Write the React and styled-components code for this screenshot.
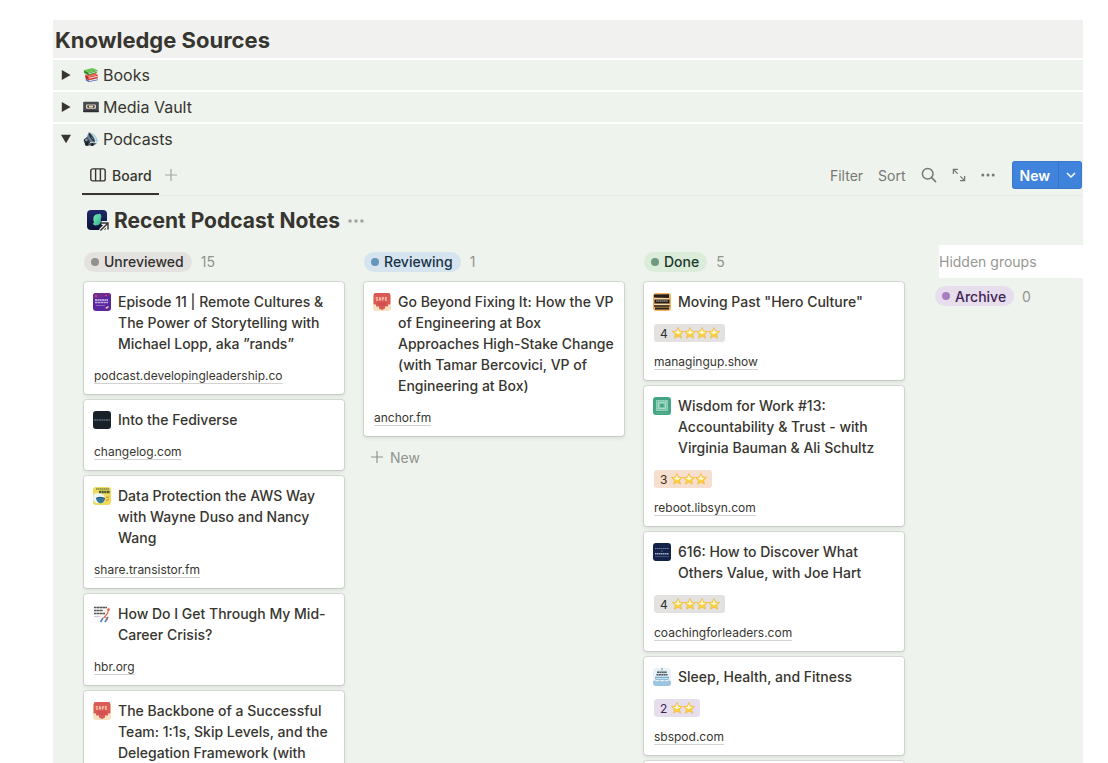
import React from "react";
import styled, { createGlobalStyle } from "styled-components";

const star = "M8 .6l2.200 4.800 5.300.6-3.900 3.600 1.100 5.400L8 12.300 3.300 15l1.100-5.400L.5 6l5.300-.6z";

function StarIcon() {
  return (
    <svg width="12" height="12" viewBox="0 0 16 16" aria-hidden="true">
      <path d={star} fill="#fbd23c" stroke="#eeb445" strokeWidth=".8" strokeLinejoin="round" />
      <path d="M8 2.400l1.500 3.900 3.600.5L8 9.600 2.900 6.800l3.600-.5z" fill="#fff9d2" />
    </svg>
  );
}

function PlusIcon() {
  return (
    <svg width="14" height="14" viewBox="0 0 14 14" stroke="currentColor" strokeWidth="1.200" aria-hidden="true">
      <path d="M7 1v12M1 7h12" />
    </svg>
  );
}

function DotsIcon({ size = 14 }) {
  return (
    <svg width={size} height={size} viewBox="0 0 14 14" fill="currentColor" aria-hidden="true">
      <circle cx="1.800" cy="7" r="1.500" />
      <circle cx="7" cy="7" r="1.500" />
      <circle cx="12.200" cy="7" r="1.500" />
    </svg>
  );
}

function BooksIcon() {
  return (
    <svg width="16" height="16" viewBox="0 0 16 16" aria-hidden="true">
      <path d="M2.800 11.400l3.200 1.800 8.600-1.600v1.600l-8.800 1.900-3-1.700z" fill="#5767b5" />
      <path d="M5.800 13.300l8.600-1.700v.9l-8.600 1.800z" fill="#eceefa" />
      <path d="M2.200 7.800L12 5.600l2.600 1.800-8.800 2.200z" fill="#ee5a4c" />
      <path d="M2.200 7.800l3.600 1.900v3.600l-3.400-2z" fill="#c5281f" />
      <path d="M5.800 9.700l8.800-2v3.600l-8.800 2z" fill="#d8342b" />
      <path d="M6 10.700l8.400-1.900v1L6 11.800z" fill="#f7ebe8" />
      <path d="M.8 3.200L9.400 1l4.800 2-8.400 2.600z" fill="#67c64f" />
      <path d="M.8 3.200l5 2.500v2.600L1.200 5.900z" fill="#2f8a2c" />
      <path d="M5.800 5.700L14.200 3v2.400L5.800 8.200z" fill="#3b9b33" />
      <path d="M6 6.400l8-2.500v.8L6 7.300z" fill="#e3efdd" />
    </svg>
  );
}

function TapeIcon() {
  return (
    <svg width="16" height="16" viewBox="0 0 16 16" aria-hidden="true">
      <rect x=".2" y="2.800" width="15.600" height="10.200" rx=".8" fill="#45484d" />
      <rect x=".2" y="11.600" width="15.600" height="1.600" rx=".6" fill="#2a2c30" />
      <rect x="3" y="5.400" width="10" height="4.400" rx="1" fill="#d9d3c9" />
      <rect x="4.200" y="6.200" width="7.600" height="2.800" rx="1.400" fill="#3d3b3a" />
      <rect x="5.800" y="6.600" width="4.400" height="2" fill="#f0d9ae" />
    </svg>
  );
}

function SpeakerIcon() {
  return (
    <svg width="16" height="16" viewBox="0 0 16 16" aria-hidden="true">
      <path d="M7 1.400c4.600.4 8 5 8.200 9.800l-4 1z" fill="#d3e6e8" />
      <path d="M9 2.600c2.800 1.400 4.600 4.600 4.800 8" fill="none" stroke="#a6c7cf" />
      <path d="M5.800 1.600c2-.6 6.600 6.200 6.400 9.200L6 11.200 3.600 6.600z" fill="#6b8193" />
      <path d="M5.800 1.600c2 1.400 5 5.600 6.200 9.200-3.400-.8-6.600-5.800-6.200-9.200z" fill="#22303b" />
      <path d="M8 5.400c1.200.8 2 2 2.400 3.200-1.200-.6-2.200-1.800-2.400-3.200z" fill="#7b95a5" />
      <path d="M.8 8.400l3-2.200 3.600 5-3 2.400C2 13.600.6 10.800.8 8.400z" fill="#2b333c" />
      <path d="M1.800 8.800l2-1.400 1.200 1.600-2 1.600z" fill="#8f9fac" />
      <path d="M4 12.600l7-1.200 3 1.400-4.800 2-4.600-.2z" fill="#56636e" />
      <circle cx="3.800" cy="13" r="1.900" fill="#1c232b" />
      <circle cx="9.400" cy="13.600" r="1.500" fill="#1c232b" />
    </svg>
  );
}

function BoardIcon() {
  return (
    <svg width="16" height="14" viewBox="0 0 16 14" fill="none" stroke="currentColor" strokeWidth="1.400" aria-hidden="true">
      <rect x=".8" y=".9" width="14.400" height="12" rx="2" />
      <path d="M5.600 1v12M10.400 1v12" />
    </svg>
  );
}

function SearchIcon() {
  return (
    <svg width="16" height="16" viewBox="0 0 16 16" fill="none" stroke="currentColor" strokeWidth="1.500" strokeLinecap="round" aria-hidden="true">
      <circle cx="6.700" cy="6.700" r="5.300" />
      <path d="M10.600 10.600l4 4" />
    </svg>
  );
}

function ExpandIcon() {
  return (
    <svg width="14" height="14" viewBox="0 0 14 14" fill="none" stroke="currentColor" strokeWidth="1.300" aria-hidden="true">
      <path d="M1.400 6V1.400H6M1.400 1.400l4.200 4.200M12.600 8v4.600H8M12.600 12.600L8.400 8.400" />
    </svg>
  );
}

function PageLogo() {
  return (
    <svg width="24" height="24" viewBox="0 0 24 24" aria-hidden="true">
      <defs>
        <linearGradient id="logo-back" x1="0" y1="0" x2="0" y2="1">
          <stop offset="0" stopColor="#20286e" />
          <stop offset="1" stopColor="#0d1033" />
        </linearGradient>
        <linearGradient id="logo-leaf" x1="0" y1="0" x2="1" y2="1">
          <stop offset="0" stopColor="#7af0bd" />
          <stop offset="1" stopColor="#2fae86" />
        </linearGradient>
      </defs>
      <rect x="1" y="1" width="20" height="20" rx="4" fill="url(#logo-back)" />
      <path
        d="M7.400 9.600c0-3 2.200-4.600 4.600-4.300 1.200-1 2.600-.7 2.900.6.800 1.500.5 2.800-.2 4 .9 2.300-.2 5-2.500 6.200-2.200.8-4.600.2-5.400-1.400.8-.4 1.200-.9 1.300-1.600-.7-.9-.9-2.200-.7-3.500z"
        fill="url(#logo-leaf)"
      />
      <path d="M14.400 21.600l7.200-7.200M15.600 14h6.400v6.400" fill="none" stroke="#eef3ed" strokeWidth="4" />
      <path d="M14.400 21.600l7.200-7.200M15.600 14h6.400v6.400" fill="none" stroke="#37352f" strokeWidth="1.400" />
    </svg>
  );
}

const artwork = {
  leadership: (
    <>
      <rect width="18" height="18" fill="#5a279e" />
      <path d="M0 0h18v3L0 6z" fill="#6f2c92" />
      <path d="M2 7h13" stroke="#d5c3ef" strokeWidth="1.600" strokeDasharray="2 .4" />
      <path d="M2 9.500h13" stroke="#c4abe6" strokeWidth="1.600" strokeDasharray="2.400 .4" />
      <path d="M3 12.500h9" stroke="#8c66c4" />
      <circle cx="3" cy="3" r="1" fill="#e0574a" />
      <circle cx="13" cy="2.500" r=".8" fill="#d9604f" />
      <path d="M12 15l3-2 1 .8-2 2z" fill="#f4d0b0" />
    </>
  ),
  changelog: (
    <>
      <rect width="18" height="18" fill="#18212a" />
      <path d="M1 9h16" stroke="#7f8990" strokeDasharray="2 .4" />
    </>
  ),
  cloud: (
    <>
      <rect width="18" height="18" fill="#eddc5c" />
      <path d="M3 2h13" stroke="#79823f" strokeWidth="1.600" strokeDasharray="1.600 .4" />
      <path d="M6 5h11" stroke="#4e5b34" strokeWidth="2.400" strokeDasharray="2.200 .4" />
      <path d="M0 10c0-3 3-5 6-3.400 3-.4 6 1.400 5.600 4.400l-3 5H3l-3-3z" fill="#edf4f4" />
      <path d="M3 11.500c2-1.500 6-1.500 9 0-.4 3-2.400 4.800-4.400 4.800S3.600 14.500 3 11.500z" fill="#35789b" />
      <path d="M3 11.500c2-1.500 6-1.500 9 0" stroke="#1f4a66" fill="none" />
      <path d="M13 10.500l3-.5M13 13.500l3-1" stroke="#dd7c35" />
    </>
  ),
  coaching: (
    <>
      <rect width="18" height="18" fill="#fafafa" />
      <path d="M1 2.500h13M1 5.500h9M1 8.500h11" stroke="#555" strokeWidth="1.600" strokeDasharray="2.600 .3" />
      <path d="M1 11.500h6" stroke="#cfc5de" />
      <path d="M7.500 17l2.500-4M12 17l3-5" stroke="#4a86bf" strokeWidth="1.600" />
      <path d="M10.500 13l4-4.500L15.500 4M12.500 12l2 3" stroke="#e4694a" strokeWidth="1.200" fill="none" />
      <circle cx="15.500" cy="4.500" r="1.300" fill="#e0603c" />
    </>
  ),
  superteam: (
    <>
      <rect width="18" height="18" fill="#f6e2bf" />
      <path d="M1 0h16v11.500h-2v2h-3v2l-3 1.500-3-1.500v-2H3v-2H1z" fill="#da5a57" />
      <path d="M0 2h1v9H0zM17 2h1v9h-1z" fill="#ecaa93" />
      <path d="M3 7.300h1.800V6H3.200V4.500H5M6.500 4.200v3h1.300v-3M9.600 7.600V4.400h1.200V6H9.800M14 4.400h-1.500v3H14M12.500 6H14" stroke="#f3c3a5" fill="none" />
      <path d="M4 10h10M5 12h8" stroke="#cb4a4b" />
    </>
  ),
  managing: (
    <>
      <rect width="18" height="18" fill="#f0b25a" />
      <path d="M1 1.500l15-.3V5L1 4.600zM1.500 6.500h15v4h-15zM1 12.200h15.500v1.600H1zM2 14.600h14v2H2z" fill="#231f1e" />
      <path d="M1 5.700h15M1.500 11.400h15" stroke="#f9e9cd" strokeWidth=".8" />
      <path d="M3 8h12" stroke="#b9b4ac" strokeDasharray="1.600 .3" />
    </>
  ),
  reboot: (
    <>
      <rect width="18" height="18" fill="#43a581" />
      <rect x="3.500" y="3.500" width="11" height="10" fill="#7cc5aa" stroke="#a5dcc7" strokeDasharray="1.200 .4" />
      <rect x="5.600" y="5.600" width="6.800" height="5.800" fill="none" stroke="#b6e2d2" strokeWidth=".8" />
      <rect x="7.500" y="7.200" width="3" height="2.600" fill="#3b9d7a" />
      <path d="M3 16h12" stroke="#6bbb9e" strokeWidth=".8" />
    </>
  ),
  leaders: (
    <>
      <rect width="18" height="18" fill="#12224a" />
      <path d="M2 5.500h14" stroke="#7f8cab" strokeWidth=".8" strokeDasharray="1.600 .3" />
      <path d="M8 8h2" stroke="#66759a" strokeWidth=".8" />
      <path d="M2 10.700h14" stroke="#a3aec5" strokeWidth="1.400" strokeDasharray="1.600 .4" />
      <path d="M2 13.500h14" stroke="#4a5a80" strokeWidth=".8" />
    </>
  ),
  stronger: (
    <>
      <rect width="18" height="18" fill="#e9f2f7" />
      <path d="M4 2.500h10l1 5.500H3z" fill="#d5e1e8" />
      <path d="M4 4.300h10M3.500 6.800h11" stroke="#4d5a65" strokeWidth="1.400" strokeDasharray="2 .4" />
      <path d="M2 8.800h14l-.6 3H2.600z" fill="#6fa8ca" />
      <path d="M3 10.400h12" stroke="#eef6fa" strokeWidth=".8" />
      <path d="M0 13.500l2-1.200 2 1.200 2.500-1.200L9 13.500l2.500-1.200 2.500 1.200 2-1.200 2 1.200V18H0z" fill="#9cc5e0" />
      <path d="M9 0v2.200" stroke="#5a8fb8" />
    </>
  ),
};

const groups = [
  {
    name: "Unreviewed",
    count: 15,
    tone: "gray",
    cards: [
      { art: "leadership", title: "Episode 11 | Remote Cultures & The Power of Storytelling with Michael Lopp, aka ”rands”", site: "podcast.developingleadership.co" },
      { art: "changelog", title: "Into the Fediverse", site: "changelog.com" },
      { art: "cloud", title: "Data Protection the AWS Way with Wayne Duso and Nancy Wang", site: "share.transistor.fm" },
      { art: "coaching", title: "How Do I Get Through My Mid-Career Crisis?", site: "hbr.org" },
      { art: "superteam", title: "The Backbone of a Successful Team: 1:1s, Skip Levels, and the Delegation Framework (with" },
    ],
  },
  {
    name: "Reviewing",
    count: 1,
    tone: "blue",
    canAdd: true,
    cards: [
      {
        art: "superteam",
        title: "Go Beyond Fixing It: How the VP of Engineering at Box Approaches High-Stake Change (with Tamar Bercovici, VP of Engineering at Box)",
        site: "anchor.fm",
      },
    ],
  },
  {
    name: "Done",
    count: 5,
    tone: "green",
    cards: [
      { art: "managing", title: 'Moving Past "Hero Culture"', rating: 4, site: "managingup.show" },
      { art: "reboot", title: "Wisdom for Work #13: Accountability & Trust - with Virginia Bauman & Ali Schultz", rating: 3, site: "reboot.libsyn.com" },
      { art: "leaders", title: "616: How to Discover What Others Value, with Joe Hart", rating: 4, site: "coachingforleaders.com" },
      { art: "stronger", title: "Sleep, Health, and Fitness", rating: 2, site: "sbspod.com" },
      { title: "" },
    ],
  },
];

const tones = {
  gray: { bg: "#e3e2e0", dot: "#91918e", text: "#32302c" },
  blue: { bg: "#d5e4ee", dot: "#6495bb", text: "#183347" },
  green: { bg: "#dbecdb", dot: "#6f9a80", text: "#1c3829" },
  purple: { bg: "#e6deed", dot: "#a47fc0", text: "#412454" },
  orange: { bg: "#f6dfcf", dot: "#cb7b37", text: "#49290e" },
};

const ratingTones = { 2: "purple", 3: "orange", 4: "gray" };

function Card({ card }) {
  return (
    <CardBox>
      <CardHead>
        {card.art && (
          <Cover viewBox="0 0 18 18" aria-hidden="true">
            {artwork[card.art]}
          </Cover>
        )}
        <CardTitle>{card.title}</CardTitle>
      </CardHead>
      {card.rating && (
        <Rating $tone={ratingTones[card.rating]}>
          <span>{card.rating}</span>
          <Stars>
            {Array.from({ length: card.rating }, (_, i) => (
              <StarIcon key={i} />
            ))}
          </Stars>
        </Rating>
      )}
      {card.site && <SiteLink href="#">{card.site}</SiteLink>}
    </CardBox>
  );
}

function Toggle({ open, icon, label }) {
  return (
    <ToggleRow type="button" aria-expanded={!!open}>
      <Arrow viewBox="0 0 10 10" aria-hidden="true">
        <path d={open ? "M0 .8h10L5 9.200z" : "M.8 0v10L9.600 5z"} />
      </Arrow>
      {icon}
      <span>{label}</span>
    </ToggleRow>
  );
}

function App() {
  return (
    <Page>
      <GlobalStyle />
      <Heading>Knowledge Sources</Heading>
      <Block>
        <Toggle icon={<BooksIcon />} label="Books" />
      </Block>
      <Block>
        <Toggle icon={<TapeIcon />} label="Media Vault" />
      </Block>
      <Block $grow>
        <Toggle open icon={<SpeakerIcon />} label="Podcasts" />
        <Database>
          <Toolbar>
            <Tab type="button">
              <BoardIcon />
              Board
            </Tab>
            <AddView type="button" aria-label="Add view">
              <PlusIcon />
            </AddView>
            <Actions>
              <ToolButton type="button">Filter</ToolButton>
              <ToolButton type="button">Sort</ToolButton>
              <ToolButton type="button" aria-label="Search">
                <SearchIcon />
              </ToolButton>
              <ToolButton type="button" aria-label="Open as full page">
                <ExpandIcon />
              </ToolButton>
              <ToolButton type="button" aria-label="More">
                <DotsIcon />
              </ToolButton>
            </Actions>
            <SplitButton>
              <NewButton type="button">New</NewButton>
              <NewMenu type="button" aria-label="New from template">
                <svg width="10" height="6" viewBox="0 0 10 6" fill="none" stroke="currentColor" strokeWidth="1.500">
                  <path d="M1 1l4 4 4-4" />
                </svg>
              </NewMenu>
            </SplitButton>
          </Toolbar>
          <TitleRow>
            <PageLogo />
            <h2>Recent Podcast Notes</h2>
            <TitleMenu type="button" aria-label="Database options">
              <DotsIcon size={16} />
            </TitleMenu>
          </TitleRow>
          <Board>
            {groups.map((group) => (
              <Column key={group.name}>
                <ColumnHead>
                  <Pill $tone={group.tone}>{group.name}</Pill>
                  <Count>{group.count}</Count>
                </ColumnHead>
                {group.cards.map((card, i) => (
                  <Card key={i} card={card} />
                ))}
                {group.canAdd && (
                  <AddCard type="button">
                    <PlusIcon />
                    New
                  </AddCard>
                )}
              </Column>
            ))}
            <HiddenColumn>
              <HiddenTitle>Hidden groups</HiddenTitle>
              <HiddenItem>
                <Pill $tone="purple">Archive</Pill>
                <Count>0</Count>
              </HiddenItem>
            </HiddenColumn>
          </Board>
        </Database>
      </Block>
    </Page>
  );
}

const GlobalStyle = createGlobalStyle`
  * {
    box-sizing: border-box;
  }
  body {
    margin: 0;
    background: #fff;
    color: #37352f;
    font-family: Inter, "Liberation Sans", sans-serif;
  }
  button {
    border: none;
    background: none;
    padding: 0;
    color: inherit;
    font: inherit;
    cursor: pointer;
  }
  svg {
    flex-shrink: 0;
  }
`;

const Page = styled.main`
  display: flex;
  flex-direction: column;
  gap: 2px;
  height: 100vh;
  padding: 20px 25px 0 53px;
  overflow: hidden;
`;

const Heading = styled.h1`
  margin: 0;
  padding: 5px 2px 3px;
  background: #f1f1ef;
  font-size: 22px;
  font-weight: 700;
  line-height: 30px;
`;

const Block = styled.section`
  flex: ${(props) => (props.$grow ? "1 0 auto" : "none")};
  background: #eef3ed;
`;

const ToggleRow = styled.button`
  display: flex;
  align-items: center;
  width: 100%;
  height: 30px;
  padding-left: 8px;
  font-size: 16px;
  text-align: left;

  svg + svg {
    margin: 0 4px 0 12px;
  }
`;

const Arrow = styled.svg`
  width: 10px;
  height: 10px;
  fill: #37352f;
`;

const Database = styled.div`
  padding-left: 29px;
`;

const Toolbar = styled.div`
  display: flex;
  align-items: center;
  height: 42px;
  margin-right: 1px;
  padding-top: 1px;
  border-bottom: 1px solid #e6eae5;
  font-size: 14px;
`;

const Tab = styled.button`
  display: flex;
  align-items: center;
  gap: 6px;
  align-self: stretch;
  padding: 2px 7px 0 8px;
  border-bottom: 2px solid #37352f;
  font-weight: 500;
`;

const AddView = styled.button`
  display: flex;
  margin-left: 5px;
  color: #a5a7a1;
`;

const Actions = styled.div`
  display: flex;
  align-items: center;
  gap: 15px;
  margin: 0 17px 0 auto;
`;

const ToolButton = styled.button`
  display: flex;
  color: #787874;
`;

const SplitButton = styled.div`
  display: flex;
  height: 28px;
  border-radius: 3px;
  background: #3f83dd;
  box-shadow: inset 0 0 0 1px rgba(15, 15, 15, 0.1);
  color: #fff;
`;

const NewButton = styled.button`
  padding: 0 8px;
  font-weight: 600;
`;

const NewMenu = styled.button`
  display: flex;
  align-items: center;
  justify-content: center;
  width: 24px;
  border-left: 1px solid #3874c4;
`;

const TitleRow = styled.div`
  display: flex;
  align-items: center;
  gap: 4px;
  height: 49px;
  padding-left: 4px;

  h2 {
    margin: 0;
    font-size: 21px;
    font-weight: 700;
  }
`;

const TitleMenu = styled.button`
  display: flex;
  margin-left: 4px;
  color: #a0a29c;
`;

const Board = styled.div`
  display: flex;
  gap: 20px;
  padding-left: 2px;
  overflow: hidden;
`;

const Column = styled.div`
  display: flex;
  flex: none;
  flex-direction: column;
  gap: 6px;
  width: 260px;
`;

const ColumnHead = styled.div`
  display: flex;
  align-items: center;
  gap: 9px;
  height: 31px;
  padding-top: 2px;
`;

const Pill = styled.span`
  display: flex;
  align-items: center;
  gap: 5px;
  height: 20px;
  padding: 0 8px 0 7px;
  border-radius: 10px;
  background: ${(props) => tones[props.$tone].bg};
  color: ${(props) => tones[props.$tone].text};
  font-size: 14px;
  font-weight: 500;

  &::before {
    content: "";
    width: 8px;
    height: 8px;
    border-radius: 50%;
    background: ${(props) => tones[props.$tone].dot};
  }
`;

const Count = styled.span`
  color: #92948e;
  font-size: 14px;
`;

const CardBox = styled.article`
  min-height: 70px;
  padding: 9px;
  border-radius: 3px;
  background: #fff;
  box-shadow: 0 0 0 1px rgba(15, 15, 15, 0.1), 0 2px 4px rgba(15, 15, 15, 0.1);
`;

const CardHead = styled.div`
  display: flex;
  gap: 7px;
`;

const Cover = styled.svg`
  width: 18px;
  height: 18px;
  margin-top: 2px;
  border-radius: 3px;
`;

const CardTitle = styled.h3`
  margin: 0;
  font-size: 14px;
  font-weight: 500;
  line-height: 21px;
`;

const Rating = styled.div`
  display: flex;
  align-items: center;
  gap: 4px;
  width: fit-content;
  height: 18px;
  margin: 12px 0 -2px 1px;
  padding: 0 5px 0 6px;
  border-radius: 3px;
  background: ${(props) => tones[props.$tone].bg};
  color: ${(props) => tones[props.$tone].text};
  font-size: 12px;
`;

const Stars = styled.span`
  display: flex;
`;

const SiteLink = styled.a`
  display: block;
  width: fit-content;
  margin: 13px 0 0 1px;
  color: #37352f;
  font-size: 12px;
  line-height: 18px;
  text-decoration: underline;
  text-decoration-color: #d3d2d0;
  text-underline-offset: 3px;
`;

const AddCard = styled.button`
  display: flex;
  align-items: center;
  gap: 6px;
  height: 30px;
  padding-left: 6px;
  color: #92948e;
  font-size: 14px;
`;

const HiddenColumn = styled.div`
  flex: 1;
  min-width: 140px;
  margin-left: 11px;
`;

const HiddenTitle = styled.div`
  height: 33px;
  margin-left: 4px;
  background: #fff;
  color: #979792;
  font-size: 14px;
  line-height: 33px;
`;

const HiddenItem = styled.div`
  display: flex;
  align-items: center;
  gap: 8px;
  height: 36px;
`;

export default App;
